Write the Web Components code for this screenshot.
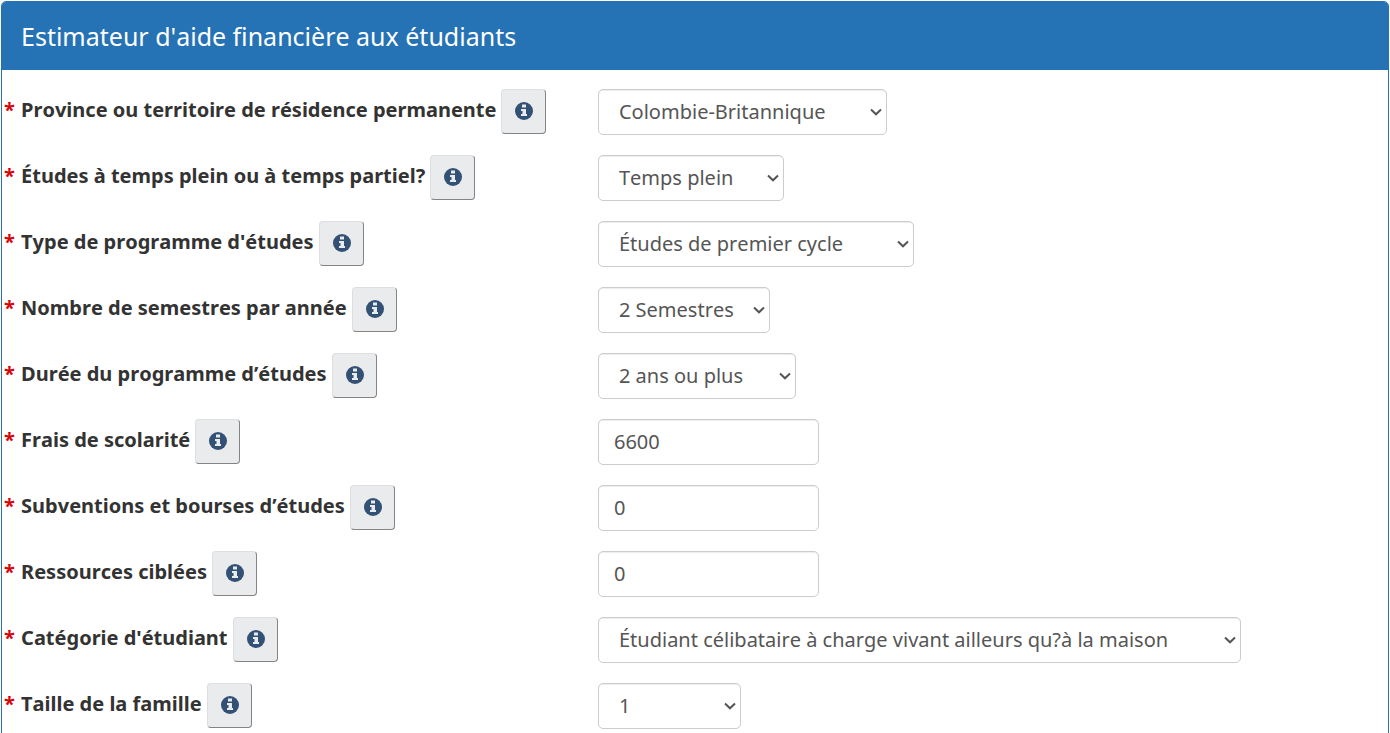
<!DOCTYPE html>
<html lang="fr">
<head>
<meta charset="utf-8">
<meta name="viewport" content="width=device-width, initial-scale=1">
<title>Estimateur d'aide financière aux étudiants</title>
<style>
  body {
    margin: 1px 1px 0;
    background: #fff;
    color: #333;
    font: 20px/28px "Noto Sans", "Open Sans", sans-serif;
    font-kerning: none;
  }
</style>
</head>
<body>
<estimator-panel heading="Estimateur d'aide financière aux étudiants">
  <form-row label="Province ou territoire de résidence permanente" type="select" value="Colombie-Britannique" width="289"></form-row>
  <form-row label="Études à temps plein ou à temps partiel?" type="select" value="Temps plein" width="186"></form-row>
  <form-row label="Type de programme d'études" type="select" value="Études de premier cycle" width="316"></form-row>
  <form-row label="Nombre de semestres par année" type="select" value="2 Semestres" width="172"></form-row>
  <form-row label="Durée du programme d’études" type="select" value="2 ans ou plus" width="198"></form-row>
  <form-row label="Frais de scolarité" type="text" value="6600" width="221"></form-row>
  <form-row label="Subventions et bourses d’études" type="text" value="0" width="221"></form-row>
  <form-row label="Ressources ciblées" type="text" value="0" width="221"></form-row>
  <form-row label="Catégorie d'étudiant" type="select" value="Étudiant célibataire à charge vivant ailleurs qu?à la maison" width="643"></form-row>
  <form-row label="Taille de la famille" type="select" value="1" width="143"></form-row>
</estimator-panel>

<script>
class EstimatorPanel extends HTMLElement {
  constructor() {
    super();
    this.attachShadow({ mode: 'open' });
  }

  connectedCallback() {
    this.shadowRoot.innerHTML = `
      <style>
        :host {
          display: block;
          border: 1px solid #2572b4;
          border-radius: 5px;
          overflow: hidden;
        }
        header {
          padding: 17px 19px;
          background: #2572b4;
          color: #fff;
        }
        h1 {
          margin: 0;
          font-size: 25px;
          font-weight: 400;
          line-height: 34px;
        }
        form {
          display: grid;
          gap: 20px;
          padding: 19px 0 20px;
        }
      </style>
      <header><h1></h1></header>
      <form><slot></slot></form>
    `;
    this.shadowRoot.querySelector('h1').textContent = this.getAttribute('heading');
  }
}

class InfoButton extends HTMLElement {
  constructor() {
    super();
    this.attachShadow({ mode: 'open' });
  }

  connectedCallback() {
    this.shadowRoot.innerHTML = `
      <style>
        :host {
          display: block;
          flex: none;
        }
        button {
          display: grid;
          place-items: center;
          box-sizing: border-box;
          width: 45px;
          height: 45px;
          margin: 0;
          padding: 0 0 1px 1px;
          border: 1px solid;
          border-color: #dcdee1 #848484 #848484 #dcdee1;
          border-radius: 4px;
          background: #eaebed;
          color: #335075;
          cursor: pointer;
        }
        svg {
          display: block;
          width: 18px;
          height: 18px;
        }
      </style>
      <button type="button" aria-label="Renseignements">
        <svg viewBox="0 0 18 18" aria-hidden="true">
          <circle cx="9" cy="9" r="9" fill="currentColor"/>
          <path d="M7 2.5h4v3H7zM6 7h5v5h1v2H6v-2h1.500V9H6z" fill="#eaebed"/>
        </svg>
      </button>
    `;
  }
}

class FormRow extends HTMLElement {
  constructor() {
    super();
    this.attachShadow({ mode: 'open' });
  }

  connectedCallback() {
    this.render();
    const value = this.getAttribute('value');
    const field = this.shadowRoot.getElementById('field');
    this.shadowRoot.querySelector('.text').textContent = this.getAttribute('label');
    this.shadowRoot.querySelector('.control').style.width = this.getAttribute('width') + 'px';
    if (field.tagName === 'SELECT') {
      field.add(new Option(value));
    } else {
      field.value = value;
    }
  }

  render() {
    const control = this.getAttribute('type') === 'select'
      ? `<select id="field" required></select>
         <svg viewBox="0 0 12 8" aria-hidden="true"><path d="M1 1.500l5 4.800 5-4.800"/></svg>`
      : '<input id="field" type="text" inputmode="numeric" required>';
    this.shadowRoot.innerHTML = `
      <style>
        :host {
          display: grid;
          grid-template-columns: 43% 1fr;
          align-items: start;
        }
        .caption {
          display: flex;
          align-items: start;
          gap: 5px;
          padding-left: 2px;
        }
        label {
          padding-top: 7px;
          font-weight: 700;
        }
        .star {
          margin-right: 1px;
          color: #d3080c;
        }
        /* field and arrow share one cell */
        .control {
          display: grid;
          grid-template-areas: "field";
          align-items: center;
          max-width: 100%;
        }
        select, input {
          grid-area: field;
          appearance: none;
          box-sizing: border-box;
          width: 100%;
          height: 46px;
          margin: 0;
          padding: 6px 15px 8px;
          border: 1px solid #ccc;
          border-radius: 5px;
          background: #fff;
          box-shadow: inset 0 1px 1px rgba(0, 0, 0, 0.075);
          color: #555;
          font: inherit;
          font-kerning: inherit;
        }
        select {
          padding: 6px 20px;
        }
        svg {
          grid-area: field;
          justify-self: end;
          width: 12px;
          height: 8px;
          margin-right: 5px;
          fill: none;
          stroke: #555;
          stroke-width: 2;
          pointer-events: none;
        }
      </style>
      <div class="caption">
        <label for="field"><span class="star">*</span> <span class="text"></span></label>
        <info-button></info-button>
      </div>
      <div class="control">${control}</div>
    `;
  }
}

customElements.define('estimator-panel', EstimatorPanel);
customElements.define('info-button', InfoButton);
customElements.define('form-row', FormRow);
</script>
</body>
</html>
